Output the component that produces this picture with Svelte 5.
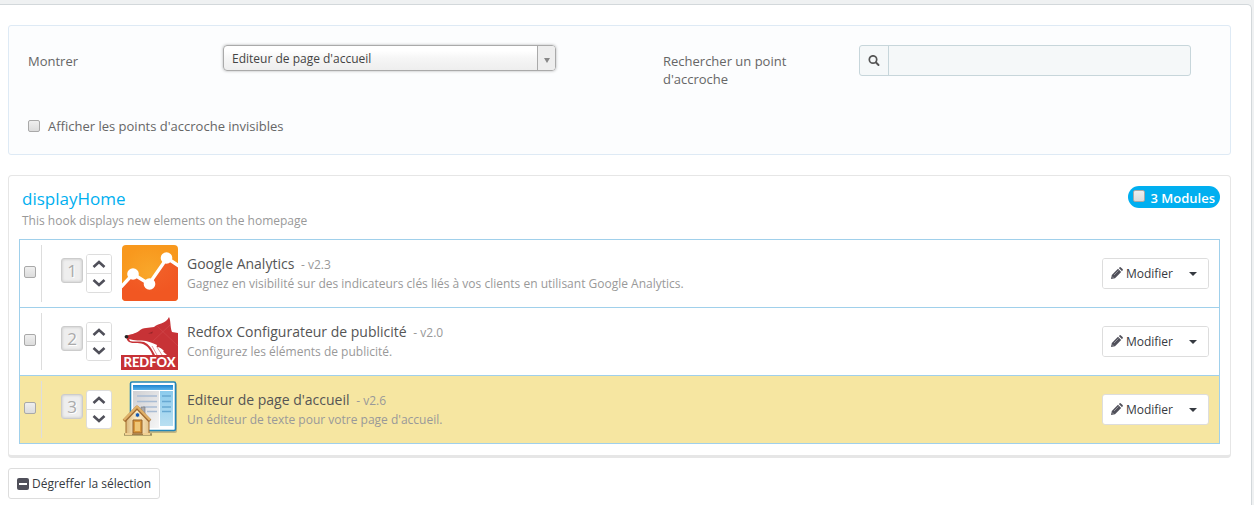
<script lang="ts">
    let hooks = ["Editeur de page d'accueil", "Tous les modules"];
    let selectedHook = hooks[0];
    let search = "";
    let showInvisible = false;
    let allChecked = false;

    let modules = [
        {
            icon: "analytics",
            name: "Google Analytics",
            version: "v2.3",
            description: "Gagnez en visibilité sur des indicateurs clés liés à vos clients en utilisant Google Analytics.",
            checked: false,
        },
        {
            icon: "redfox",
            name: "Redfox Configurateur de publicité",
            version: "v2.0",
            description: "Configurez les éléments de publicité.",
            checked: false,
        },
        {
            icon: "editor",
            name: "Editeur de page d'accueil",
            version: "v2.6",
            description: "Un éditeur de texte pour votre page d'accueil.",
            checked: false,
            highlight: true,
        },
    ];

    function toggleAll() {
        modules = modules.map(m => ({ ...m, checked: allChecked }));
    }

    function move(index: number, step: number) {
        const target = index + step;
        if (target < 0 || target >= modules.length) return;
        const next = [...modules];
        [next[index], next[target]] = [next[target], next[index]];
        modules = next;
    }
</script>

<main>
    <form class="filters" on:submit|preventDefault>
        <div class="filter-row">
            <label for="show-modules">Montrer</label>
            <div class="select">
                <select id="show-modules" bind:value={selectedHook}>
                    {#each hooks as hook}
                        <option>{hook}</option>
                    {/each}
                </select>
                <span class="select-arrow"></span>
            </div>
            <label class="search-label" for="hook-search">Rechercher un point d'accroche</label>
            <div class="search">
                <span class="search-icon">
                    <svg width="12" height="12" viewBox="0 0 12 12">
                        <circle cx="5" cy="4.5" r="3.7" fill="none" stroke="#555" stroke-width="1.7" />
                        <path d="M8 7.500l2.500 2.500" stroke="#555" stroke-width="2" stroke-linecap="round" />
                    </svg>
                </span>
                <input id="hook-search" type="text" bind:value={search}>
            </div>
        </div>
        <label class="invisible">
            <input type="checkbox" bind:checked={showInvisible}>
            Afficher les points d'accroche invisibles
        </label>
    </form>

    <section class="hook">
        <header>
            <div>
                <h2>displayHome</h2>
                <p>This hook displays new elements on the homepage</p>
            </div>
            <label class="badge">
                <input type="checkbox" bind:checked={allChecked} on:change={toggleAll}>
                <span>3 Modules</span>
            </label>
        </header>

        <ul>
            {#each modules as module, i}
                <li class:highlight={module.highlight}>
                    <div class="check">
                        <input type="checkbox" aria-label={module.name} bind:checked={module.checked}>
                    </div>
                    <span class="position">{i + 1}</span>
                    <div class="arrows">
                        <button type="button" aria-label="Monter" on:click={() => move(i, -1)}>
                            <svg width="14" height="9" viewBox="0 0 14 9"><path d="M1.500 7L7 2l5.500 5" fill="none" stroke="#50505a" stroke-width="2.600" /></svg>
                        </button>
                        <button type="button" aria-label="Descendre" on:click={() => move(i, 1)}>
                            <svg width="14" height="9" viewBox="0 0 14 9"><path d="M1.500 2L7 7l5.500-5" fill="none" stroke="#50505a" stroke-width="2.600" /></svg>
                        </button>
                    </div>
                    <svg class="logo" width="57" height="57" viewBox="0 0 57 57">
                        {#if module.icon === "analytics"}
                            <defs>
                                <radialGradient id="ga-top" cx="0.5" cy="0.5" r="0.5">
                                    <stop offset="0" stop-color="#f9a72b" />
                                    <stop offset="1" stop-color="#f8981d" />
                                </radialGradient>
                                <radialGradient id="ga-bottom" cx="0.5" cy="0.2" r="0.6">
                                    <stop offset="0" stop-color="#f2632a" />
                                    <stop offset="1" stop-color="#f15722" />
                                </radialGradient>
                                <clipPath id="ga-clip"><rect x="1" y="0" width="56" height="56" rx="4" /></clipPath>
                            </defs>
                            <g clip-path="url(#ga-clip)">
                                <rect width="57" height="57" fill="url(#ga-top)" />
                                <path d="M0 42L12 29 28 39 46 13 57 21V57H0z" fill="url(#ga-bottom)" />
                                <path d="M0 42L12 29 28 39 46 13 58 21" fill="none" stroke="#fff" stroke-width="3.4" />
                                <circle cx="12" cy="29" r="5.8" fill="#fff" />
                                <circle cx="28.5" cy="39" r="5.8" fill="#fff" />
                                <circle cx="45.5" cy="13" r="5.8" fill="#fff" />
                            </g>
                        {:else if module.icon === "redfox"}
                            <path d="M5 23C10 21 14 21 18 18C22 14 28 15 33 14C37 10 45 11 48 4C50 8 49 14 51 19L57 20V43H32C30 38 27 33 22 31C17 29 12 31 8 29C6 28 6 26 5 24z" fill="#c73236" />
                            <path d="M8 26C13 28 20 27 25 28C30 29 33 31 36 32L35.5 34C39 34 41 36 43 38L42 38.5L46 42H34C31 36 28 31 23 29C18 28 12 29 9 28z" fill="#fff" />
                            <path d="M31 33l5 9M36 34l5 8" stroke="#c73236" stroke-width="0.5" />
                            <path d="M27 20.5l5-2-1 2z" fill="#962327" />
                            <path d="M36 13L57 33M49 12L32 28" stroke="#d6585b" stroke-width="0.4" />
                            <ellipse cx="5.5" cy="23.8" rx="1.9" ry="1.7" fill="#252525" />
                            <rect y="42" width="57" height="15" fill="#c73236" />
                            <text x="28.5" y="54" text-anchor="middle" font-family="Lato, sans-serif" font-weight="900" font-size="13" fill="#fff">REDFOX</text>
                        {:else}
                            <defs>
                                <linearGradient id="ed-bar" x2="0" y2="1">
                                    <stop offset="0" stop-color="#1d83cf" />
                                    <stop offset="1" stop-color="#58b3ea" />
                                </linearGradient>
                                <linearGradient id="ed-side" x2="0" y2="1">
                                    <stop offset="0" stop-color="#8ccbed" />
                                    <stop offset="1" stop-color="#b9dff1" />
                                </linearGradient>
                                <linearGradient id="ed-page" x2="1" y2="1">
                                    <stop offset="0" stop-color="#cfcfd2" />
                                    <stop offset="1" stop-color="#f6f6f6" />
                                </linearGradient>
                                <linearGradient id="ed-wall" x2="1" y2="0">
                                    <stop offset="0" stop-color="#d9b77a" />
                                    <stop offset="0.5" stop-color="#fff1cf" />
                                    <stop offset="1" stop-color="#e4c48c" />
                                </linearGradient>
                            </defs>
                            <rect x="10" y="2" width="46" height="50" rx="2" fill="#8b8463" opacity="0.5" />
                            <rect x="9.5" y="1" width="45" height="48.5" rx="1.5" fill="#fff" stroke="#2386b7" stroke-width="1.6" />
                            <rect x="12" y="4" width="40" height="5" fill="url(#ed-bar)" />
                            <rect x="12" y="10" width="26" height="37" fill="url(#ed-page)" />
                            <rect x="39" y="10" width="13" height="35" fill="url(#ed-side)" />
                            <path d="M16 15h20M16 20.5h20M22 26h14M26 30.5h10" stroke="#a9bcd3" stroke-width="1.5" />
                            <path d="M41 15h9M41 20.5h9M41 26h9M41 30.5h9" stroke="#68a9d2" stroke-width="1.4" />
                            <path d="M3 53.5h28" stroke="#756641" stroke-width="2.5" opacity="0.65" />
                            <path d="M20 26h4v8h-4z" fill="#a8a9ad" stroke="#77777b" stroke-width="0.6" />
                            <path d="M5 38L16 26l12 12v15H5z" fill="url(#ed-wall)" stroke="#a36d2f" />
                            <path d="M3 40L16 26.5 29 40" fill="none" stroke="#a06a30" stroke-width="3.6" stroke-linejoin="round" />
                            <path d="M3 39L16 25.5 29 39" fill="none" stroke="#dfb068" stroke-width="2.4" stroke-linejoin="round" />
                            <path d="M12 52V39h9v13z" fill="#d8973c" stroke="#946029" />
                            <path d="M14 50v-9h5v9z" fill="#efc676" />
                            <path d="M4 53h7M22 53h7" stroke="#f0d092" stroke-width="2" />
                            <circle cx="16.5" cy="34" r="2.2" fill="#1458b4" stroke="#f4e2b8" stroke-width="0.7" />
                        {/if}
                    </svg>
                    <div class="info">
                        <h3>{module.name} <small>- {module.version}</small></h3>
                        <p>{module.description}</p>
                    </div>
                    <div class="actions">
                        <button type="button" class="edit">
                            <svg width="13" height="13" viewBox="0 0 13 13">
                                <path d="M1 12l.8-4L8 1.8 11.200 5 5 11.200z" fill="#50505a" />
                                <path d="M8.800 1l1-.8q.6-.3 1.100.2l1.700 1.700q.5.5.1 1.100L12 4.200z" fill="#50505a" />
                                <path d="M4 8L8.500 3.500M2 9.500l1.500 1.500" stroke="#fff" stroke-width="0.4" />
                            </svg>
                            Modifier
                        </button>
                        <button type="button" class="toggle" aria-label="Plus d'actions"><span class="caret"></span></button>
                    </div>
                </li>
            {/each}
        </ul>
    </section>

    <button type="button" class="unhook">
        <svg width="12" height="12" viewBox="0 0 12 12">
            <rect width="12" height="12" rx="2" fill="#50505a" />
            <rect x="2" y="5" width="8" height="2" fill="#fff" />
        </svg>
        Dégreffer la sélection
    </button>
</main>

<style>
    :global(body) {
        margin: 0;
        padding: 4px 2px 0 0;
        background: #eff1f2;
    }
    main {
        box-sizing: border-box;
        min-height: calc(100vh - 4px);
        padding: 20px 20px 5px 8px;
        border: 1px solid #d3d8db;
        border-width: 1px 1px 0 0;
        border-radius: 0 5px 0 0;
        background: #fff;
        color: #666;
        font: 13px/18px "Open Sans", sans-serif;
    }
    h2, h3, p, ul {
        margin: 0;
        padding: 0;
    }
    button, input, select {
        box-sizing: border-box;
        margin: 0;
        font: inherit;
        color: inherit;
    }
    button {
        padding: 0;
        border: 0;
        background: #fff;
        cursor: pointer;
    }
    input[type="checkbox"] {
        appearance: none;
        flex: none;
        width: 12px;
        height: 12px;
        border: 1px solid #a9a9a9;
        border-radius: 2px;
        background: linear-gradient(#efefef, #dcdcdc);
    }
    input[type="checkbox"]:checked {
        background: #555;
    }
    .filters {
        box-sizing: border-box;
        min-height: 130px;
        padding: 19px;
        border: 1px solid #deeaf5;
        border-radius: 3px;
        background: #fcfdfe;
    }
    .filter-row {
        display: grid;
        grid-template-columns: 195fr 333fr 107fr 196fr 332fr 20fr;
        align-items: start;
    }
    .filter-row label {
        padding-top: 7px;
    }
    .search-label {
        grid-column: 4;
        padding-right: 40px;
    }
    .select {
        position: relative;
    }
    select {
        display: block;
        appearance: none;
        width: 100%;
        height: 26px;
        padding: 2px 30px 0 8px;
        border: 1px solid #aaa;
        border-radius: 4px;
        background: linear-gradient(#fff 20%, #f6f6f6 50%, #eee);
        box-shadow: 0 0 3px rgba(0,0,0,0.3);
        color: #444;
        font-size: 12px;
    }
    .select-arrow {
        position: absolute;
        top: 1px;
        right: 1px;
        bottom: 1px;
        width: 17px;
        display: flex;
        align-items: center;
        justify-content: center;
        border-left: 1px solid #aaa;
        border-radius: 0 3px 3px 0;
        background: #eee;
        pointer-events: none;
    }
    .select-arrow::after {
        content: "";
        margin-top: 4px;
        border: 3px solid transparent;
        border-top: 5px solid #888;
        border-bottom: 0;
    }
    .search {
        display: flex;
        height: 31px;
        box-sizing: border-box;
        border: 1px solid #c7d6db;
        border-radius: 3px;
        background: #f5f8f9;
    }
    .search-icon {
        display: flex;
        align-items: center;
        justify-content: center;
        width: 28px;
        border-right: 1px solid #c7d6db;
    }
    .search input {
        flex: 1;
        min-width: 0;
        padding: 0 8px;
        border: 0;
        background: transparent;
        outline: none;
    }
    .invisible {
        display: flex;
        align-items: center;
        gap: 8px;
        margin-top: 29px;
    }
    .hook {
        margin-top: 20px;
        padding: 10px 10px 11px;
        border: 1px solid #e6e6e6;
        border-bottom-width: 3px;
        border-radius: 4px;
    }
    .hook header {
        display: flex;
        justify-content: space-between;
        align-items: flex-start;
        padding-left: 3px;
        margin-bottom: 8px;
    }
    h2 {
        color: #00aff0;
        font-size: 17px;
        font-weight: 400;
        line-height: 25px;
    }
    .hook p {
        color: #999;
        font-size: 12px;
        line-height: 20px;
    }
    .badge {
        display: flex;
        gap: 5px;
        height: 22px;
        padding: 0 5px;
        border-radius: 11px;
        background: #00aff0;
        color: #fff;
        font-weight: 600;
    }
    .badge input {
        margin-top: 4px;
    }
    .badge span {
        padding-top: 3px;
    }
    ul {
        list-style: none;
        border: 1px solid #a0d0eb;
    }
    li {
        display: flex;
        align-items: center;
        height: 67px;
        padding: 0 10px 0 4px;
    }
    li + li {
        border-top: 1px solid #a0d0eb;
    }
    li.highlight {
        background: #f6e6a1;
    }
    .check {
        box-sizing: border-box;
        display: flex;
        align-items: center;
        width: 18px;
        height: 57px;
        padding-bottom: 3px;
        margin-right: 19px;
        border-right: 1px solid #ddd;
    }
    .position {
        box-sizing: border-box;
        width: 22px;
        height: 25px;
        margin: 0 3px 6px 0;
        border: 1px solid #ccc;
        border-radius: 3px;
        background: #eee;
        box-shadow: inset 0 0 3px rgba(0,0,0,0.2);
        color: #aaa;
        font-size: 17px;
        line-height: 23px;
        text-align: center;
        text-shadow: 1px 1px 0 #fff;
    }
    .arrows {
        display: flex;
        flex-direction: column;
        width: 24px;
        margin-right: 9px;
        border: 1px solid #ddd;
        border-radius: 3px;
        overflow: hidden;
    }
    .arrows button {
        display: flex;
        align-items: center;
        justify-content: center;
        height: 18px;
    }
    .arrows button + button {
        height: 19px;
        padding-bottom: 2px;
        border-top: 1px solid #ddd;
    }
    .logo {
        flex: none;
        margin-right: 9px;
    }
    .info {
        flex: 1;
        min-width: 0;
        padding-top: 2px;
    }
    h3 {
        color: #555;
        font-size: 14px;
        font-weight: 400;
        line-height: 18px;
    }
    h3 small {
        margin-left: 3px;
        color: #999;
        font-size: 12px;
    }
    .actions {
        display: flex;
        height: 29px;
        border: 1px solid #ddd;
        border-radius: 3px;
        overflow: hidden;
        color: #363a41;
        font-size: 12px;
    }
    .edit {
        display: flex;
        align-items: center;
        gap: 3px;
        padding: 0 5px 0 7px;
    }
    .toggle {
        width: 30px;
    }
    .caret {
        display: inline-block;
        vertical-align: middle;
        border: 4px solid transparent;
        border-top-color: #363a41;
        border-bottom: 0;
    }
    .unhook {
        display: flex;
        align-items: center;
        gap: 3px;
        height: 31px;
        margin-top: 10px;
        padding: 0 8px;
        border: 1px solid #ddd;
        border-radius: 3px;
        color: #363a41;
        font-size: 12px;
    }
</style>
